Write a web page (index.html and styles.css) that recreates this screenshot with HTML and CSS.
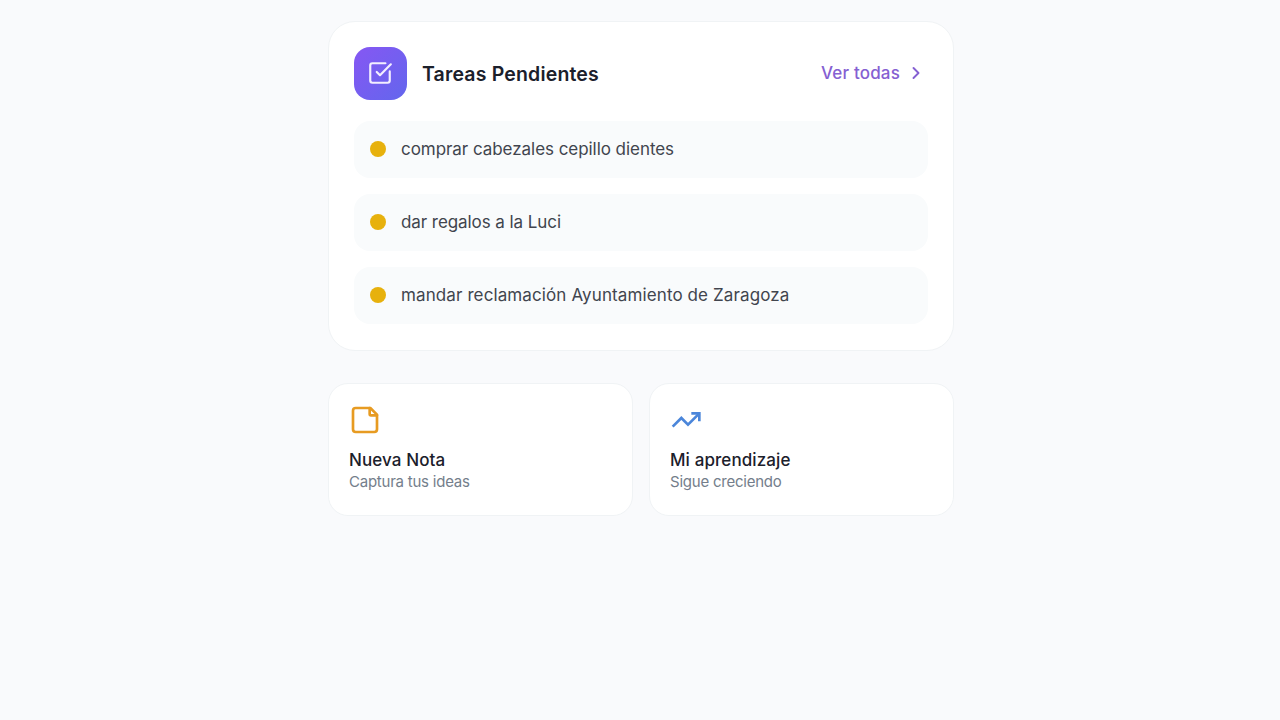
FILE: index.html
```html
<!DOCTYPE html>
<html lang="es">
<head>
<meta charset="utf-8">
<title>Tareas Pendientes</title>
<link rel="stylesheet" href="styles.css">
</head>
<body>
<main class="page">
  <section class="card tasks">
    <header class="tasks-header">
      <span class="badge">
        <svg class="badge-icon" viewBox="0 0 24 24"><path d="M21 10.5V19a2 2 0 0 1-2 2H5a2 2 0 0 1-2-2V5a2 2 0 0 1 2-2h12"/><path d="m9 11 3 3L22 4"/></svg>
      </span>
      <h2 class="tasks-title">Tareas Pendientes</h2>
      <a class="see-all"><span>Ver todas</span><svg class="chevron" viewBox="0 0 24 24"><path d="m9 18 6-6-6-6"/></svg></a>
    </header>
    <ul class="task-list">
      <li class="task"><span class="dot"></span><span class="task-one">comprar cabezales cepillo dientes</span></li>
      <li class="task"><span class="dot"></span><span class="task-two">dar regalos a la Luci</span></li>
      <li class="task"><span class="dot"></span><span class="task-three">mandar reclamación Ayuntamiento de Zaragoza</span></li>
    </ul>
  </section>
  <section class="shortcuts">
    <div class="card shortcut">
      <svg class="shortcut-icon note" viewBox="0 0 24 24"><path d="M16 3H5a2 2 0 0 0-2 2v14a2 2 0 0 0 2 2h14a2 2 0 0 0 2-2V8Z"/><path d="M15.5 3v4.500a1 1 0 0 0 1 1H21"/></svg>
      <h3 class="shortcut-title">Nueva Nota</h3>
      <p class="shortcut-text">Captura tus ideas</p>
    </div>
    <div class="card shortcut">
      <svg class="shortcut-icon trend" viewBox="0 0 24 24"><path d="m22 7-8.500 8.500-5-5L2 17"/><path d="M16 7h6v6"/></svg>
      <h3 class="shortcut-title">Mi aprendizaje</h3>
      <p class="shortcut-text">Sigue creciendo</p>
    </div>
  </section>
</main>
</body>
</html>
```
FILE: styles.css
```css
* { box-sizing: border-box; margin: 0; padding: 0; }
body { background: #f9fafc; font-family: Inter, "Liberation Sans", sans-serif; color: #1b202b; }
svg { fill: none; stroke: currentColor; stroke-width: 2; stroke-linecap: round; stroke-linejoin: round; flex: none; }
.page { width: 626px; margin: 21px 0 0 328px; }
.card { background: #fff; border: 1px solid #f0f3f5; }
.tasks { height: 330px; border-radius: 27px; padding: 25px; }
.tasks-header { display: flex; align-items: center; height: 52px; }
.badge { width: 53px; height: 53px; border-radius: 16px; background: linear-gradient(135deg, #8657f3, #6366ed); color: #f3eeff; display: flex; align-items: center; justify-content: center; padding-right: 1px; }
.badge-icon { width: 26px; height: 26px; }
.tasks-title { margin-left: 15px; padding-top: 1px; font-size: 19.5px; font-weight: 600; line-height: 28px; letter-spacing: 0.17px; white-space: nowrap; }
.see-all { margin-left: auto; padding-right: 2px; display: flex; align-items: center; gap: 6px; color: #8560d2; font-size: 17px; font-weight: 500; letter-spacing: 0.17px; white-space: nowrap; }
.chevron { width: 20px; height: 20px; stroke-width: 2.3; }
.task-list { list-style: none; display: grid; gap: 16px; margin-top: 22px; }
.task { height: 57px; border-radius: 16px; background: #f9fbfc; padding: 0 16px 1px; display: flex; align-items: center; gap: 15px; font-size: 17px; color: #41454e; white-space: nowrap; }
.task-one { letter-spacing: -0.05px; }
.task-two { letter-spacing: -0.07px; }
.task-three { letter-spacing: 0.11px; }
.dot { width: 16px; height: 16px; border-radius: 50%; background: #e7b10d; }
.shortcuts { display: grid; grid-template-columns: 305px 305px; gap: 16px; margin-top: 32px; }
.shortcut { height: 133px; border-radius: 20px; padding: 20px; }
.shortcut-icon { display: block; width: 32px; height: 32px; }
.note { color: #e79b22; }
.trend { color: #4b86da; stroke-linecap: butt; stroke-linejoin: miter; }
.shortcut-title { margin-top: 12px; font-size: 17px; font-weight: 500; line-height: 25px; letter-spacing: 0.1px; white-space: nowrap; }
.shortcut-text { margin-top: -1px; font-size: 15px; line-height: 20px; letter-spacing: -0.23px; color: #747e8b; white-space: nowrap; }
```
